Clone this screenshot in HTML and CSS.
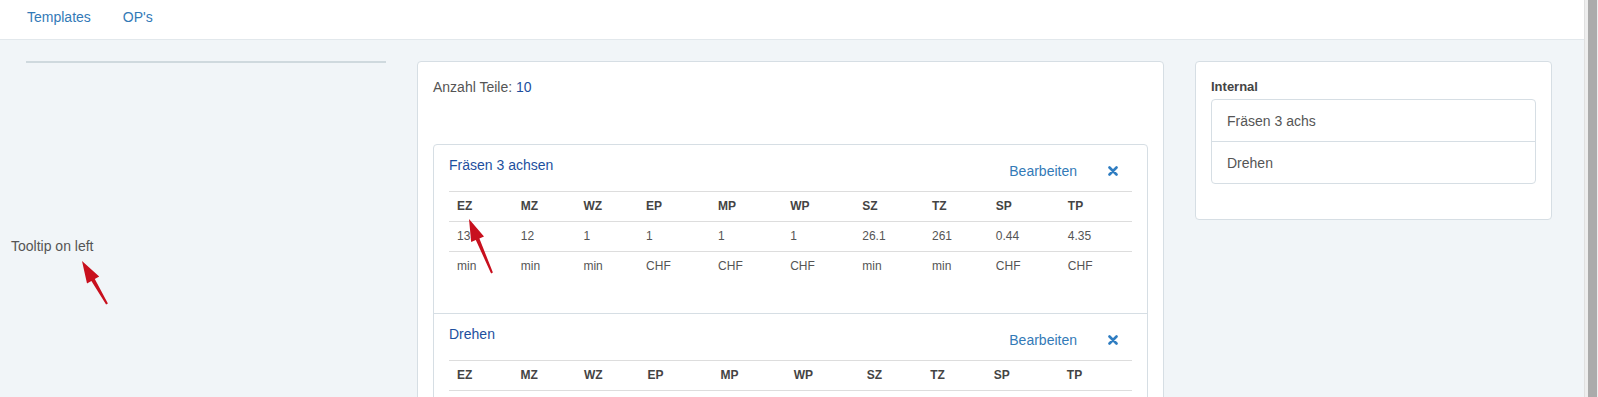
FILE: index.html
```html
<!DOCTYPE html>
<html lang="de">
<head>
    <meta charset="UTF-8">
    <meta name="viewport" content="width=device-width, initial-scale=1.0">
    <title>Kalkulation</title>
    <link rel="stylesheet" href="styles.css">
</head>
<body>
    <div class="app">
        <nav class="topnav">
            <a href="#">Templates</a>
            <a href="#">OP's</a>
        </nav>

        <div class="main">
            <div class="col-left">
                <div class="left-panel"></div>
                <div class="tooltip-demo">Tooltip on left</div>
            </div>

            <div class="card">
                <div class="count">Anzahl Teile: <span class="count-value">10</span></div>

                <div class="ops">
                    <div class="op">
                        <div class="op-head">
                            <a class="op-title" href="#">Fräsen 3 achsen</a>
                            <div class="op-actions">
                                <a href="#">Bearbeiten</a>
                                <svg class="remove" width="10" height="10" viewBox="0 0 10 10"><path d="M1.5 1.5 L8.5 8.5 M8.5 1.5 L1.5 8.5" stroke="#2f7dc1" stroke-width="2.6" stroke-linecap="round"/></svg>
                            </div>
                        </div>
                        <table class="times">
                            <tr><th>EZ</th><th>MZ</th><th>WZ</th><th>EP</th><th>MP</th><th>WP</th><th>SZ</th><th>TZ</th><th>SP</th><th>TP</th></tr>
                            <tr><td>131</td><td>12</td><td>1</td><td>1</td><td>1</td><td>1</td><td>26.1</td><td>261</td><td>0.44</td><td>4.35</td></tr>
                            <tr><td>min</td><td>min</td><td>min</td><td>CHF</td><td>CHF</td><td>CHF</td><td>min</td><td>min</td><td>CHF</td><td>CHF</td></tr>
                        </table>
                    </div>

                    <div class="op">
                        <div class="op-head">
                            <a class="op-title" href="#">Drehen</a>
                            <div class="op-actions">
                                <a href="#">Bearbeiten</a>
                                <svg class="remove" width="10" height="10" viewBox="0 0 10 10"><path d="M1.5 1.5 L8.5 8.5 M8.5 1.5 L1.5 8.5" stroke="#2f7dc1" stroke-width="2.6" stroke-linecap="round"/></svg>
                            </div>
                        </div>
                        <table class="times">
                            <tr><th>EZ</th><th>MZ</th><th>WZ</th><th>EP</th><th>MP</th><th>WP</th><th>SZ</th><th>TZ</th><th>SP</th><th>TP</th></tr>
                            <tr><td>45</td><td>8</td><td>1</td><td>0.75</td><td>0.75</td><td>0.75</td><td>5.4</td><td>54</td><td>0.09</td><td>0.90</td></tr>
                            <tr><td>min</td><td>min</td><td>min</td><td>CHF</td><td>CHF</td><td>CHF</td><td>min</td><td>min</td><td>CHF</td><td>CHF</td></tr>
                        </table>
                    </div>
                </div>
            </div>

            <div class="card side">
                <div class="side-label">Internal</div>
                <div class="list">
                    <div class="list-item">Fräsen 3 achs</div>
                    <div class="list-item">Drehen</div>
                </div>
            </div>
        </div>

        <!-- annotation arrows -->
        <svg class="arrows" width="1584" height="397" viewBox="0 0 1584 397">
            <polygon fill="#c8101e" points="469,219 484,236.5 479.4,238.4 492.9,272.6 491.1,273.4 475.8,240 471.2,241.9"/>
            <polygon fill="#c8101e" points="82,261 99.2,276.5 94.8,279 107.9,303.5 106.1,304.5 91.4,281 87,283.5"/>
        </svg>
    </div>

    <div class="scrollbar"><div class="thumb"></div></div>
</body>
</html>
```

FILE: styles.css
```css
body {
    margin: 0;
    font-family: "Liberation Sans", Arial, sans-serif;
    font-size: 14px;
    color: #555;
    background-color: #f1f5f8;
    display: flex;
    height: 100vh;
    overflow: hidden;
}
a {
    text-decoration: none;
}
.app {
    flex: 1;
    position: relative;
    min-width: 0;
}

.topnav {
    background-color: #fff;
    border-bottom: 1px solid #e2e8ec;
    height: 40px;
    box-sizing: border-box;
    padding: 7px 0 0 11px;
    display: flex;
}
.topnav a {
    color: #337ab7;
    line-height: 20px;
    padding: 0 16px;
}

.main {
    display: grid;
    grid-template-columns: 360px 747px 357px;
    column-gap: 31px;
    padding: 21px 31px 0 26px;
    align-items: start;
}

.left-panel {
    border-top: 2px solid #cfd9de;
}
.tooltip-demo {
    margin: 173px 0 0 -15px;
    line-height: 20px;
}

.card {
    background-color: #fff;
    border: 1px solid #d6dee4;
    border-radius: 4px;
    padding: 15px;
}
.count {
    line-height: 20px;
    margin-bottom: 47px;
}
.count-value {
    color: #1d4f9e;
}

.ops {
    border: 1px solid #d6dee4;
    border-radius: 4px;
}
.op {
    padding: 10px 15px;
}
.op + .op {
    border-top: 1px solid #d6dee4;
}
.op-head {
    display: flex;
    justify-content: space-between;
    align-items: flex-start;
    margin-bottom: 10px;
}
.op-title {
    color: #1d4f9e;
    line-height: 20px;
}
.op-actions {
    display: flex;
    align-items: center;
    margin-top: 6px;
    padding-right: 14px;
    line-height: 20px;
}
.op-actions a {
    color: #337ab7;
    margin-right: 31px;
}

.times {
    width: 100%;
    border-collapse: collapse;
    font-size: 12px;
    margin-bottom: 22px;
}
.times th,
.times td {
    text-align: left;
    padding: 8px;
    line-height: 13px;
    border-top: 1px solid #ddd;
    color: #555;
}
.times th {
    font-weight: bold;
    color: #444;
}

.side-label {
    font-weight: bold;
    font-size: 13px;
    color: #444;
    line-height: 20px;
    margin-bottom: 2px;
}
.list {
    border: 1px solid #d6dee4;
    border-radius: 4px;
    margin-bottom: 20px;
}
.list-item {
    padding: 11px 15px 10px 15px;
    line-height: 20px;
    color: #555;
}
.list-item + .list-item {
    border-top: 1px solid #d6dee4;
}

.arrows {
    position: absolute;
    top: 0;
    left: 0;
    pointer-events: none;
}

.scrollbar {
    width: 14px;
    background-color: #eeeeee;
    border-left: 1px solid #e0e0e0;
    box-sizing: border-box;
    padding-left: 3px;
}
.thumb {
    width: 9px;
    height: 100%;
    background-color: #ababab;
}
```
